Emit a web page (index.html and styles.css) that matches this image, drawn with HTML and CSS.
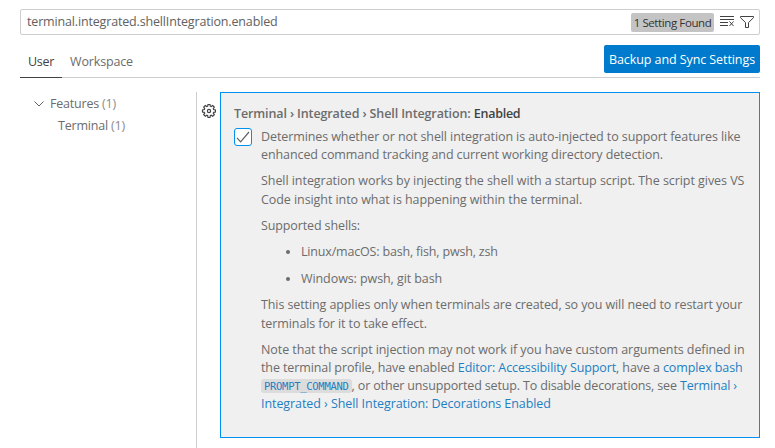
FILE: index.html
```html
<!DOCTYPE html>
<html lang="en">
<head>
<meta charset="utf-8">
<title>Settings</title>
<link rel="stylesheet" href="styles.css">
</head>
<body>
<div class="search">
  <span class="query">terminal.integrated.shellIntegration.enabled</span>
  <span class="count">1 Setting Found</span>
  <svg class="clear" width="16" height="16" viewBox="0 0 16 16" fill="none" stroke="#424242"><path d="M1 2.500h14M1 5.500h14M1 8.500h8M1 11.500h8M10.500 7.500l4 4.500M14.500 7.500l-4 4.500"/></svg>
  <svg class="filter" width="16" height="16" viewBox="0 0 16 16" fill="none" stroke="#424242"><path d="M1.500 2.500h13v1.200L9.500 8.500v5h-3v-5L1.500 3.700z"/></svg>
</div>
<div class="header">
  <div class="tabs"><span class="tab active"><span class="user">User</span></span><span class="tab"><span class="workspace">Workspace</span></span></div>
  <button class="sync"><span>Backup and Sync Settings</span></button>
</div>
<div class="body">
  <nav class="tree">
    <div class="node"><svg width="12" height="12" viewBox="0 0 12 12" fill="none" stroke="#616161"><path d="M1.500 3.500L6 8l4.500-4.500"/></svg><span>Features <i>(1)</i></span></div>
    <div class="node child"><span>Terminal <i>(1)</i></span></div>
  </nav>
  <div class="gutter">
    <svg width="16" height="16" viewBox="0 0 16 16" fill="none" stroke="#424242" stroke-width="1.200"><path d="M6.700 3.200L7 1.500h2l.3 1.700.9.400 1.500-1 1.600 1.600-1 1.500.4.900 1.700.4v2l-1.700.3-.4.900 1 1.500-1.600 1.600-1.500-1-.9.400L9 14.500H7l-.3-1.800-.9-.4-1.500 1-1.600-1.600 1-1.500-.4-.9L1.500 9V7l1.800-.4.4-.9-1-1.500 1.600-1.600 1.500 1z"/><circle cx="8" cy="8" r="1.600"/></svg>
  </div>
  <main class="setting">
    <h1><span class="path">Terminal › Integrated › Shell Integration: </span><span class="name">Enabled</span></h1>
    <div class="row">
      <div class="check"><svg width="16" height="16" viewBox="0 0 16 16" fill="none" stroke="#616161" stroke-width="1.200"><path d="M2 8.800l3.600 4L14 3"/></svg></div>
      <div class="desc">
        <p><span class="l1">Determines whether or not shell integration is auto-injected to support features like</span><br><span class="l2">enhanced command tracking and current working directory detection.</span></p>
        <p><span class="l3">Shell integration works by injecting the shell with a startup script. The script gives VS</span><br><span class="l4">Code insight into what is happening within the terminal.</span></p>
        <p><span class="l5">Supported shells:</span></p>
        <ul><li><span class="l6">Linux/macOS: bash, fish, pwsh, zsh</span></li><li><span class="l7">Windows: pwsh, git bash</span></li></ul>
        <p><span class="l8">This setting applies only when terminals are created, so you will need to restart your</span><br><span class="l9">terminals for it to take effect.</span></p>
        <p><span class="l10">Note that the script injection may not work if you have custom arguments defined in</span><br><span class="l11">the terminal profile, have enabled <a>Editor: Accessibility Support</a>, have a <a>complex bash</a></span><br><span class="l12"><code>PROMPT_COMMAND</code>, or other unsupported setup. To disable decorations, see <a>Terminal ›</a></span><br><span class="l13"><a>Integrated › Shell Integration: Decorations Enabled</a></span></p>
      </div>
    </div>
  </main>
</div>
</body>
</html>
```
FILE: styles.css
```css
* { box-sizing: border-box; }
body {
  margin: 0;
  height: 448px;
  padding: 9px 15px 0 20px;
  overflow: hidden;
  background: #fff;
  color: #6c6c6c;
  font: 12.5px/18.2px "Open Sans", "Noto Sans", sans-serif;
  white-space: nowrap;
}
svg { display: block; flex: none; }
.search {
  height: 26px;
  border: 1px solid #cecece;
  border-radius: 2px;
  display: flex;
  align-items: center;
  padding: 0 4px 0 6px;
  color: #616161;
}
.query { letter-spacing: -.16px; padding-top: 1px; }
.count {
  margin-left: auto;
  width: 83px;
  height: 19px;
  border-radius: 2px;
  background: #c4c4c4;
  color: #333;
  font-size: 11.500px;
  letter-spacing: -.4px;
  line-height: 19px;
  text-align: center;
}
.clear { margin-left: 5px; }
.filter { margin-left: 4px; }
.header {
  height: 43px;
  border-bottom: 1px solid #cecece;
  display: flex;
  justify-content: space-between;
  align-items: flex-end;
  margin-bottom: 14px;
}
.tabs { display: flex; align-self: flex-end; margin-bottom: -1px; }
.tab { height: 26px; padding: 0 8px; line-height: 19px; border-bottom: 1px solid transparent; }
.active { width: 42px; color: #424242; border-color: #424242; }
.user { letter-spacing: -.25px; }
.workspace { letter-spacing: -.15px; }
.sync {
  width: 156px;
  height: 28px;
  margin: 0 0 4px;
  padding: 1px 0 0;
  border: 0;
  border-radius: 2px;
  background: #007acc;
  color: #fff;
  font: 12.5px/27px "Open Sans", "Noto Sans", sans-serif;
  letter-spacing: -.08px;
}
.body { display: flex; height: 356px; }
.tree { width: 177px; border-right: 1px solid #cecece; padding: 1px 0 0 13px; letter-spacing: -.2px; }
.node { height: 22px; display: flex; align-items: center; gap: 5px; }
.node i { font-style: normal; color: #8b8b8b; }
.child { padding-left: 25px; }
.gutter { width: 23px; padding: 11px 0 0 4px; }
.setting {
  width: 540px;
  height: 346px;
  border: 1px solid #0090f1;
  background: #f0f0f0;
  padding: 12px 0 0 13px;
}
h1 { margin: 0; height: 22px; font-size: 12.5px; font-weight: 600; line-height: 18px; white-space: pre; }
.path { letter-spacing: -.12px; }
.name { color: #424242; letter-spacing: -.25px; }
.row { display: flex; gap: 9px; }
.check {
  width: 18px;
  height: 18px;
  margin-top: 1px;
  border: 1px solid #0090f1;
  border-radius: 3px;
  background: #fff;
  display: flex;
  align-items: center;
  justify-content: center;
}
.desc { padding-top: 1px; }
.l1, .l2, .l8, .l9 { letter-spacing: -.095px; }
.l3 { letter-spacing: -.055px; }
.l4, .l13 { letter-spacing: -.07px; }
.l5 { letter-spacing: -.12px; }
.l6 { letter-spacing: -.18px; }
.l7, .l10 { letter-spacing: -.08px; }
.l11 { letter-spacing: -.105px; }
.l12 { letter-spacing: -.15px; }
p { margin: 0 0 8px; }
ul { margin: 0; padding-left: 40px; }
li { margin-bottom: 8.500px; }
a { color: #1e7fc2; }
code {
  font: 10.500px/14px "DejaVu Sans Mono", monospace;
  letter-spacing: -.28px;
  background: #dcdcdc;
  border-radius: 3px;
  padding: 1px 3px;
  color: #1e7fc2;
}
```
